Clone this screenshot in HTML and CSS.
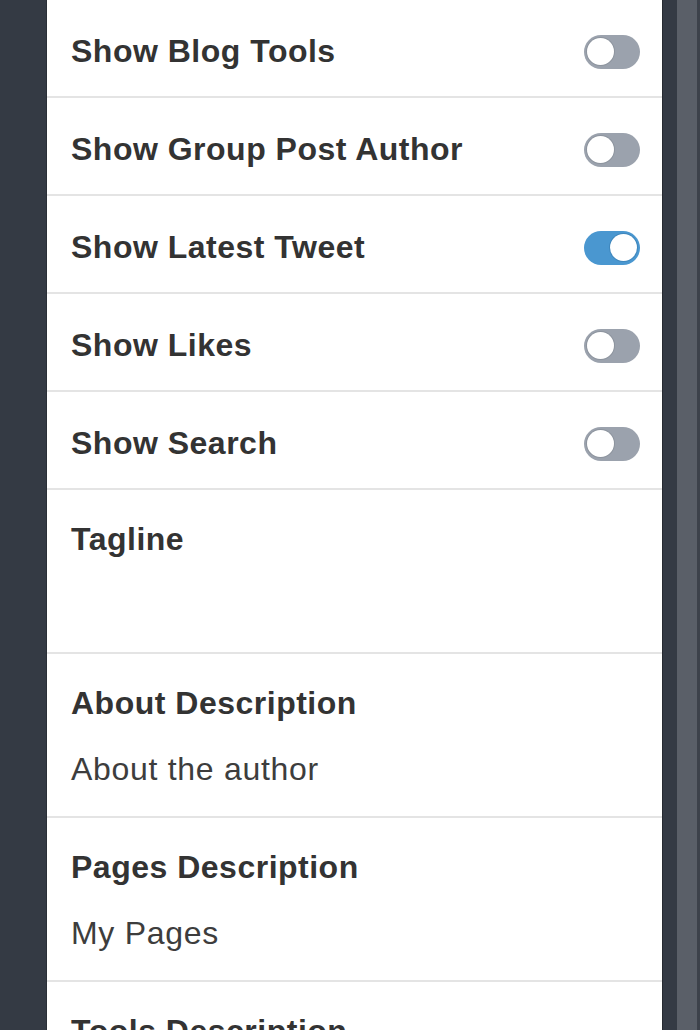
FILE: index.html
```html
<!DOCTYPE html>
<html>
<head>
<meta charset="utf-8">
<link rel="stylesheet" href="styles.css">
</head>
<body>
<div class="frame">
  <div class="gutter-left"></div>
  <main class="panel">
    <div class="row">
      <span class="label">Show Blog Tools</span>
      <span class="toggle"><span class="knob"></span></span>
    </div>
    <div class="row">
      <span class="label">Show Group Post Author</span>
      <span class="toggle"><span class="knob"></span></span>
    </div>
    <div class="row">
      <span class="label">Show Latest Tweet</span>
      <span class="toggle on"><span class="knob"></span></span>
    </div>
    <div class="row">
      <span class="label">Show Likes</span>
      <span class="toggle"><span class="knob"></span></span>
    </div>
    <div class="row">
      <span class="label">Show Search</span>
      <span class="toggle"><span class="knob"></span></span>
    </div>
    <div class="field">
      <div class="label">Tagline</div>
      <div class="value"></div>
    </div>
    <div class="field">
      <div class="label">About Description</div>
      <div class="value">About the author</div>
    </div>
    <div class="field">
      <div class="label">Pages Description</div>
      <div class="value">My Pages</div>
    </div>
    <div class="field">
      <div class="label">Tools Description</div>
      <div class="value">My Tools</div>
    </div>
  </main>
  <div class="gutter-right">
    <div class="strip-dark"></div>
    <div class="strip-light"></div>
    <div class="strip-edge"></div>
  </div>
</div>
</body>
</html>
```

FILE: styles.css
```css
html, body {
  margin: 0;
  padding: 0;
  height: 100%;
  overflow: hidden;
}
body {
  background: #343a44;
  font-family: "Liberation Sans", Arial, sans-serif;
}
.frame {
  display: flex;
  height: 1030px;
  overflow: hidden;
}
.gutter-left {
  width: 46px;
  flex: none;
  background: #343a44;
  border-right: 1px solid #2a2f37;
}
.panel {
  width: 615px;
  flex: none;
  background: #ffffff;
  margin-top: -2px;
  border-top: 2px solid #e4e4e4;
}
.gutter-right {
  flex: 1;
  display: flex;
}
.strip-dark {
  width: 14px;
  background: #343a44;
  border-left: 1px solid #262a31;
}
.strip-light {
  width: 20px;
  background: #5a5f68;
}
.strip-edge {
  flex: 1;
  background: #3d424b;
}
.row {
  height: 96px;
  border-bottom: 2px solid #e4e4e4;
  display: flex;
  align-items: center;
  justify-content: space-between;
  padding: 7px 22px 0 24px;
  box-sizing: content-box;
  height: 89px;
}
.label {
  font-size: 32px;
  font-weight: bold;
  color: #333333;
  letter-spacing: 0.5px;
}
.toggle {
  width: 56px;
  height: 34px;
  border-radius: 17px;
  background: #9ba2ad;
  display: flex;
  align-items: center;
  padding: 0 3px;
  box-sizing: border-box;
}
.toggle .knob {
  width: 27px;
  height: 27px;
  border-radius: 50%;
  background: #ffffff;
  box-shadow: 0 0 0 1px #8d949e;
}
.toggle.on {
  background: #4a97d0;
  justify-content: flex-end;
}
.toggle.on .knob {
  box-shadow: 0 0 0 1px #3f87bd;
}
.field {
  height: 164px;
  border-bottom: 2px solid #e4e4e4;
  padding: 31px 24px 0 24px;
  box-sizing: border-box;
  display: flex;
  flex-direction: column;
  gap: 30px;
}
.field .label {
  line-height: 36px;
}
.value {
  font-size: 32px;
  color: #3d3d3d;
  line-height: 36px;
  height: 36px;
  letter-spacing: 0.7px;
}
```
